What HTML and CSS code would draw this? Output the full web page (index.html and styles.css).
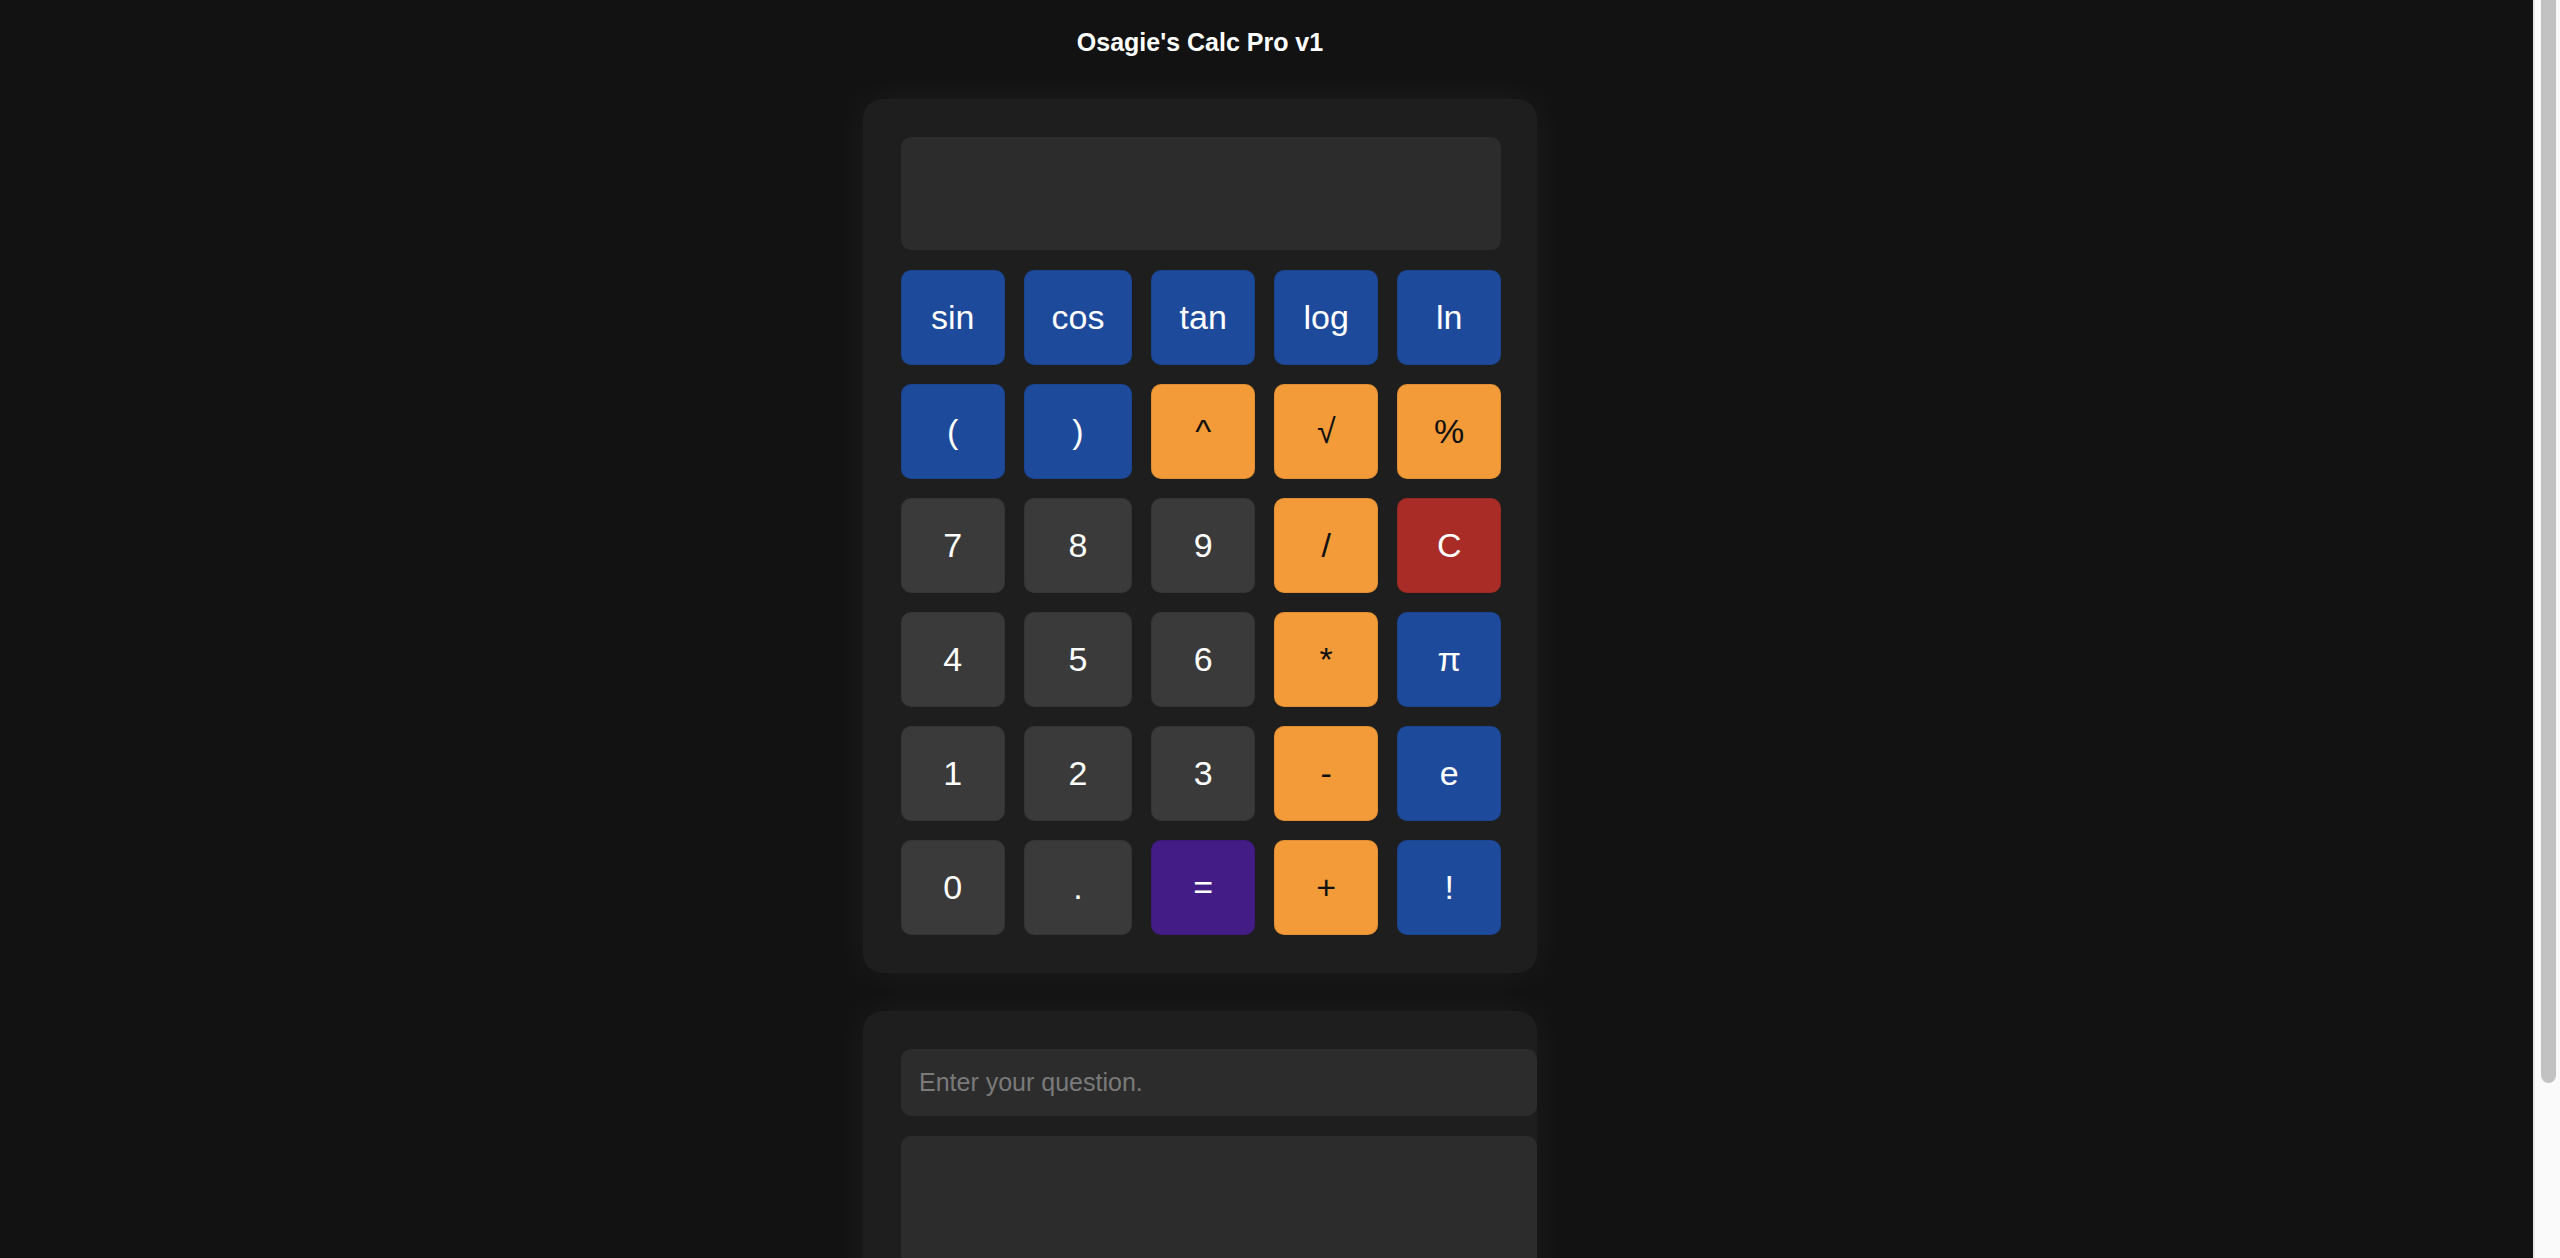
FILE: index.html
```html
<!DOCTYPE html>
<html lang="en">
  <head>
    <meta charset="UTF-8" />
    <meta name="viewport" content="width=device-width, initial-scale=1.0" />
    <title>Osagie's Calc Pro v1</title>
    <link rel="stylesheet" href="styles.css">
  </head>
  <body>
    <h1 class="title">Osagie's Calc Pro v1</h1>

    <div class="calculator">
      <div class="display" id="display"></div>
      <div class="keys">
        <button class="key fn">sin</button>
        <button class="key fn">cos</button>
        <button class="key fn">tan</button>
        <button class="key fn">log</button>
        <button class="key fn">ln</button>

        <button class="key fn">(</button>
        <button class="key fn">)</button>
        <button class="key op">^</button>
        <button class="key op">√</button>
        <button class="key op">%</button>

        <button class="key">7</button>
        <button class="key">8</button>
        <button class="key">9</button>
        <button class="key op">/</button>
        <button class="key clear">C</button>

        <button class="key">4</button>
        <button class="key">5</button>
        <button class="key">6</button>
        <button class="key op">*</button>
        <button class="key fn">π</button>

        <button class="key">1</button>
        <button class="key">2</button>
        <button class="key">3</button>
        <button class="key op">-</button>
        <button class="key fn">e</button>

        <button class="key">0</button>
        <button class="key">.</button>
        <button class="key equals">=</button>
        <button class="key op">+</button>
        <button class="key fn">!</button>
      </div>
    </div>

    <div class="ask-box">
      <input type="text" class="question" placeholder="Enter your question." />
      <textarea class="answer" readonly></textarea>
    </div>

    <!-- window scrollbar as it shows in the screenshot -->
    <div class="fake-scrollbar"><div class="fake-thumb"></div></div>
  </body>
</html>
```

FILE: styles.css
```css
/* Basic styling */
html,
body {
  margin: 0;
  padding: 0;
}

body {
  font-family: "Liberation Sans", Arial, Helvetica, sans-serif;
  background-color: #121212;
  color: #ffffff;
  padding-right: 160px;
  padding-bottom: 40px;
}

.title {
  margin: 0;
  padding-top: 28px;
  text-align: center;
  font-size: 25px;
  font-weight: bold;
}

.calculator,
.ask-box {
  width: 600px;
  margin: 42px auto 0;
  padding: 38px 36px 38px 38px;
  background-color: #1e1e1e;
  border-radius: 20px;
  box-shadow: 0 0 40px rgba(255, 255, 255, 0.05);
}

.ask-box {
  margin-top: 38px;
}

.display {
  height: 113px;
  margin-bottom: 20px;
  background-color: #2c2c2c;
  border-radius: 10px;
}

.keys {
  display: grid;
  grid-template-columns: repeat(5, 1fr);
  gap: 19px 19.5px;
}

.key {
  padding: 28px 27.5px;
  font-family: inherit;
  font-size: 34px;
  color: #ffffff;
  background-color: #3a3a3a;
  border: none;
  border-radius: 10px;
  box-shadow: inset 0 0 0 1px rgba(0, 0, 0, 0.08);
  cursor: pointer;
}

.fn {
  background-color: #1e4a9c;
}

.op {
  background-color: #f29b38;
  color: #111111;
}

.clear {
  background-color: #a92d26;
}

.equals {
  background-color: #431d85;
}

/* question + answer */
.question,
.answer {
  display: block;
  width: 100%;
  font-family: inherit;
  font-size: 25px;
  color: #ffffff;
  background-color: #2c2c2c;
  border: none;
  border-radius: 10px;
  outline: none;
}

.question {
  padding: 19px 18px;
  margin-bottom: 20px;
}

.question::placeholder {
  color: #7a7a7a;
}

.answer {
  height: 210px;
  padding: 18px;
  resize: none;
}

/* scrollbar */
.fake-scrollbar {
  position: fixed;
  top: 0;
  right: 0;
  bottom: 0;
  width: 25px;
  background-color: #fafafa;
  border-left: 2px solid #e6e6e6;
}

.fake-thumb {
  width: 15px;
  height: 1083px;
  margin-left: 6px;
  background-color: #c2c2c2;
  border-radius: 0 0 8px 8px;
}
```
